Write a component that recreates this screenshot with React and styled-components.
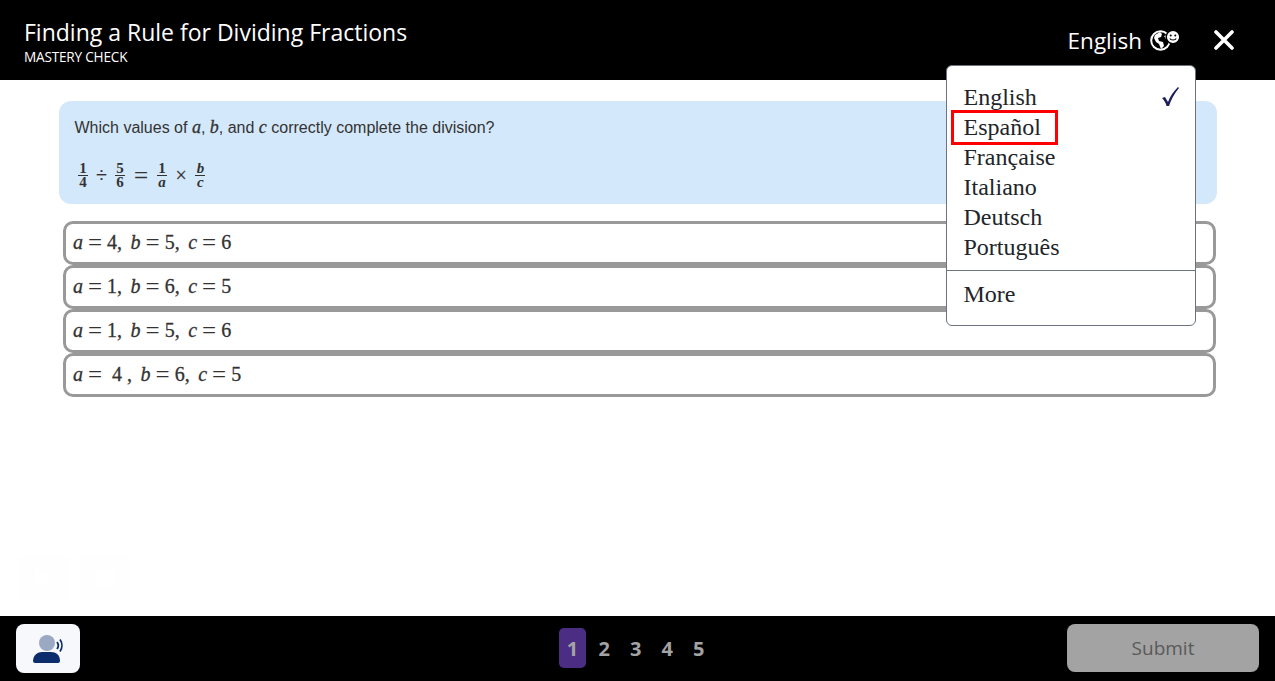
import React from 'react';
import styled, { createGlobalStyle } from 'styled-components';

const GlobalStyle = createGlobalStyle`
  html, body {
    margin: 0;
    padding: 0;
    height: 100%;
    background: #fff;
    overflow: hidden;
  }
  #root {
    height: 100%;
  }
`;

const Page = styled.div`
  position: relative;
  display: flex;
  flex-direction: column;
  width: 1275px;
  height: 681px;
  font-family: "Open Sans", "Noto Sans", sans-serif;
`;

const Header = styled.header`
  display: flex;
  align-items: center;
  justify-content: space-between;
  flex: 0 0 80px;
  padding: 0 41px 0 24px;
  background: #000;
  color: #fff;
`;

const TitleBlock = styled.div`
  display: flex;
  flex-direction: column;
  padding-top: 3px;
`;

const Title = styled.h1`
  margin: 0;
  font-size: 23px;
  font-weight: 400;
  line-height: 30px;
`;

const Subtitle = styled.div`
  margin-top: 1px;
  font-size: 13.6px;
  line-height: 18px;
  letter-spacing: -0.2px;
`;

const HeaderActions = styled.div`
  display: flex;
  align-items: center;
`;

const Language = styled.span`
  margin: 1px 8px 0 0;
  font-size: 22.5px;
  line-height: 30px;
`;

const CloseButton = styled.button`
  display: flex;
  padding: 0;
  margin-left: 34px;
  border: 0;
  background: none;
  cursor: pointer;
`;

const Main = styled.main`
  flex: 1;
  padding: 21px 58px 0 59px;
`;

const Question = styled.section`
  height: 103px;
  box-sizing: border-box;
  padding: 16px 15.5px 0;
  margin-bottom: 17px;
  border-radius: 12px;
  background: #d3e8fa;
  color: #333;
  font-family: "Liberation Sans", Arial, sans-serif;
  font-size: 16px;
  line-height: 21px;
`;

const Equation = styled.div`
  display: flex;
  align-items: center;
  height: 32px;
  margin-top: 21px;
  padding-left: 3.5px;
  font-family: "Liberation Serif", serif;
  color: #333;
`;

const Fraction = styled.span`
  display: inline-flex;
  flex-direction: column;
  align-items: center;
  width: 10px;
  font-size: 15px;
  line-height: 12px;
  font-weight: 700;

  & > span:first-child {
    width: 100%;
    padding-bottom: 1px;
    border-bottom: 1px solid #333;
    text-align: center;
  }
`;

const EquationOp = styled.span`
  margin: 0 ${({ $gap }) => $gap}px;
  font-size: ${({ $size }) => $size}px;
  line-height: 1;
  -webkit-text-stroke: 0.2px #333;
`;

const Variable = styled.i`
  font-family: "Liberation Serif", serif;
  font-size: ${({ $size }) => $size || 20}px;
  -webkit-text-stroke: 0.3px currentColor;
`;

const Options = styled.div`
  display: flex;
  flex-direction: column;
  margin: 0 1px 0 4px;
`;

const Option = styled.button`
  display: flex;
  align-items: center;
  height: 44px;
  box-sizing: border-box;
  padding: 0 6px 2px 7px;
  border: 3px solid #999;
  border-radius: 10px;
  background: #fff;
  font-family: "Liberation Serif", serif;
  font-size: 20px;
  color: #333;
  -webkit-text-stroke: 0.3px #333;
  white-space: pre;
  cursor: pointer;
`;

const Rel = styled.span`
  margin: 0 5px;
  font-size: 25px;
  line-height: 1;
  -webkit-text-stroke: 0;
`;

const Sep = styled.span`
  margin-right: 8.5px;
`;

const GhostControls = styled.div`
  position: absolute;
  left: 19px;
  top: 556px;
  display: flex;
  gap: 11px;
`;

const GhostButton = styled.div`
  display: flex;
  align-items: center;
  justify-content: center;
  width: 50px;
  height: 44px;
  background: #fefefe;
`;

const Footer = styled.footer`
  display: grid;
  grid-template-columns: 1fr auto 1fr;
  align-items: center;
  flex: 0 0 65px;
  padding: 0 16px;
  background: #000;
`;

const AudioButton = styled.button`
  display: flex;
  align-items: center;
  justify-content: center;
  justify-self: start;
  width: 64px;
  height: 49px;
  padding: 0;
  border: 0;
  border-radius: 8px;
  background: #f6f8fb;
  cursor: pointer;
`;

const Pager = styled.nav`
  display: flex;
  align-items: center;
  margin: -1px 0 0 -1.5px;
`;

const PageNumber = styled.span`
  width: ${({ $active }) => ($active ? 27 : 31.5)}px;
  height: 40px;
  margin-right: ${({ $active }) => ($active ? 2.5 : 0)}px;
  border-radius: 5px;
  background: ${({ $active }) => ($active ? '#4b2e83' : 'transparent')};
  color: #a3a3a3;
  font-size: 20px;
  font-weight: 700;
  line-height: 42px;
  text-align: center;
`;

const Submit = styled.button`
  justify-self: end;
  width: 192px;
  height: 48px;
  margin-top: -1px;
  border: 0;
  border-radius: 8px;
  background: #a3a3a3;
  color: #595959;
  font-family: "Open Sans", "Noto Sans", sans-serif;
  font-size: 19px;
  cursor: not-allowed;
`;

const LanguageMenu = styled.div`
  position: absolute;
  left: 946px;
  top: 65px;
  width: 250px;
  height: 261px;
  box-sizing: border-box;
  padding-top: 16px;
  border: 1px solid #6c757d;
  border-radius: 6px;
  background: #fff;
  font-family: "Liberation Serif", serif;
  font-size: 24px;
  line-height: 30px;
  color: #212529;
`;

const MenuItem = styled.div`
  display: flex;
  align-items: center;
  justify-content: space-between;
  height: 30px;
  padding: 0 16px 0 16.5px;
`;

const MenuDivider = styled.hr`
  margin: 8px 0;
  border: 0;
  border-top: 1px solid #6c757d;
`;

const Highlight = styled.div`
  position: absolute;
  left: 951px;
  top: 110px;
  width: 107px;
  height: 35px;
  box-sizing: border-box;
  border: 3px solid #f00;
  pointer-events: none;
`;

const languages = ['English', 'Español', 'Française', 'Italiano', 'Deutsch', 'Português'];

const answers = [
  ['4', '5', '6'],
  ['1', '6', '5'],
  ['1', '5', '6'],
];

function GlobeIcon() {
  return (
    <svg width="30" height="22" viewBox="0 0 30 22">
      <circle cx="10.500" cy="11.500" r="9.300" fill="none" stroke="#fff" strokeWidth="2" />
      <path d="M5 6l5-3 2 2-1 3-3 1 1 3 4 1 1 4-3 3-2-5-3-2-2-4z" fill="#fff" />
      <path d="M14 7l3-1 1 3-2 1z" fill="#fff" />
      <circle cx="23" cy="8" r="6.800" fill="#fff" stroke="#000" strokeWidth="1.500" />
      <circle cx="20.700" cy="6.500" r="1" fill="#000" />
      <circle cx="25.300" cy="6.500" r="1" fill="#000" />
      <path d="M19.800 9.500c1 2 5.400 2 6.400 0" fill="none" stroke="#000" strokeWidth="1.200" />
    </svg>
  );
}

function CloseIcon() {
  return (
    <svg width="20" height="20" viewBox="0 0 20 20">
      <path d="M2 2l16 16M18 2L2 18" stroke="#fff" strokeWidth="3.600" strokeLinecap="round" />
    </svg>
  );
}

function CheckIcon() {
  return (
    <svg width="18" height="20" viewBox="0 0 18 20">
      <path
        d="M1 11l3-1 3 5c2-6 6-11 10-15l1 1c-5 6-8 12-10 18H5.500C5 16 3 13 1 11z"
        fill="#1f1f5c"
      />
    </svg>
  );
}

function ReaderIcon() {
  return (
    <svg width="30" height="29" viewBox="0 0 30 29">
      <circle cx="14" cy="9" r="8" fill="#9aa8c4" />
      <path d="M0 27c0-6 5-9 9-9h9c5 0 9 3 9 9 0 1-1 2-2 2H2c-1 0-2-1-2-2z" fill="#0b2d6b" />
      <path d="M24 8c1.500 2 1.500 5 0 7M27 5.500c2.500 3.500 2.500 8.500 0 12" fill="none" stroke="#0b2d6b" strokeWidth="1.800" />
    </svg>
  );
}

function Answer({ a, b, c }) {
  return (
    <>
      <Variable>a</Variable><Rel>=</Rel>{a}<Sep>,</Sep>
      <Variable>b</Variable><Rel>=</Rel>{b}<Sep>,</Sep>
      <Variable>c</Variable><Rel>=</Rel>{c}
    </>
  );
}

export default function App() {
  return (
    <Page>
      <GlobalStyle />
      <Header>
        <TitleBlock>
          <Title>Finding a Rule for Dividing Fractions</Title>
          <Subtitle>MASTERY CHECK</Subtitle>
        </TitleBlock>
        <HeaderActions>
          <Language>English</Language>
          <GlobeIcon />
          <CloseButton aria-label="Close"><CloseIcon /></CloseButton>
        </HeaderActions>
      </Header>

      <Main>
        <Question>
          Which values of <Variable $size={18}>a</Variable>, <Variable $size={18}>b</Variable>, and{' '}
          <Variable $size={18}>c</Variable> correctly complete the division?
          <Equation>
            <Fraction><span>1</span><span>4</span></Fraction>
            <EquationOp $gap={8} $size={20}>÷</EquationOp>
            <Fraction><span>5</span><span>6</span></Fraction>
            <EquationOp $gap={9} $size={25}>=</EquationOp>
            <Fraction><span>1</span><span><i>a</i></span></Fraction>
            <EquationOp $gap={8.500} $size={20}>×</EquationOp>
            <Fraction><span><i>b</i></span><span><i>c</i></span></Fraction>
          </Equation>
        </Question>
        <Options>
          {answers.map(([a, b, c]) => (
            <Option key={a + b + c}><Answer a={a} b={b} c={c} /></Option>
          ))}
          <Option>
            <Variable>a</Variable><Rel>=</Rel>{' 4 '}<Sep>,</Sep>
            <Variable>b</Variable><Rel>=</Rel>6<Sep>,</Sep>
            <Variable>c</Variable><Rel>=</Rel>5
          </Option>
        </Options>
      </Main>

      <GhostControls>
        <GhostButton>
          <svg width="18" height="20" viewBox="0 0 18 20"><path d="M0 0l18 10L0 20z" fill="#fff" /></svg>
        </GhostButton>
        <GhostButton>
          <svg width="19" height="16" viewBox="0 0 19 16"><path d="M0 0h19v16H0z" fill="#fff" /></svg>
        </GhostButton>
      </GhostControls>

      <Footer>
        <AudioButton aria-label="Read aloud"><ReaderIcon /></AudioButton>
        <Pager>
          {[1, 2, 3, 4, 5].map((n) => (
            <PageNumber key={n} $active={n === 1}>{n}</PageNumber>
          ))}
        </Pager>
        <Submit disabled>Submit</Submit>
      </Footer>

      <LanguageMenu>
        {languages.map((name) => (
          <MenuItem key={name}>
            {name}
            {name === 'English' && <CheckIcon />}
          </MenuItem>
        ))}
        <MenuDivider />
        <MenuItem>More</MenuItem>
      </LanguageMenu>
      <Highlight />
    </Page>
  );
}
